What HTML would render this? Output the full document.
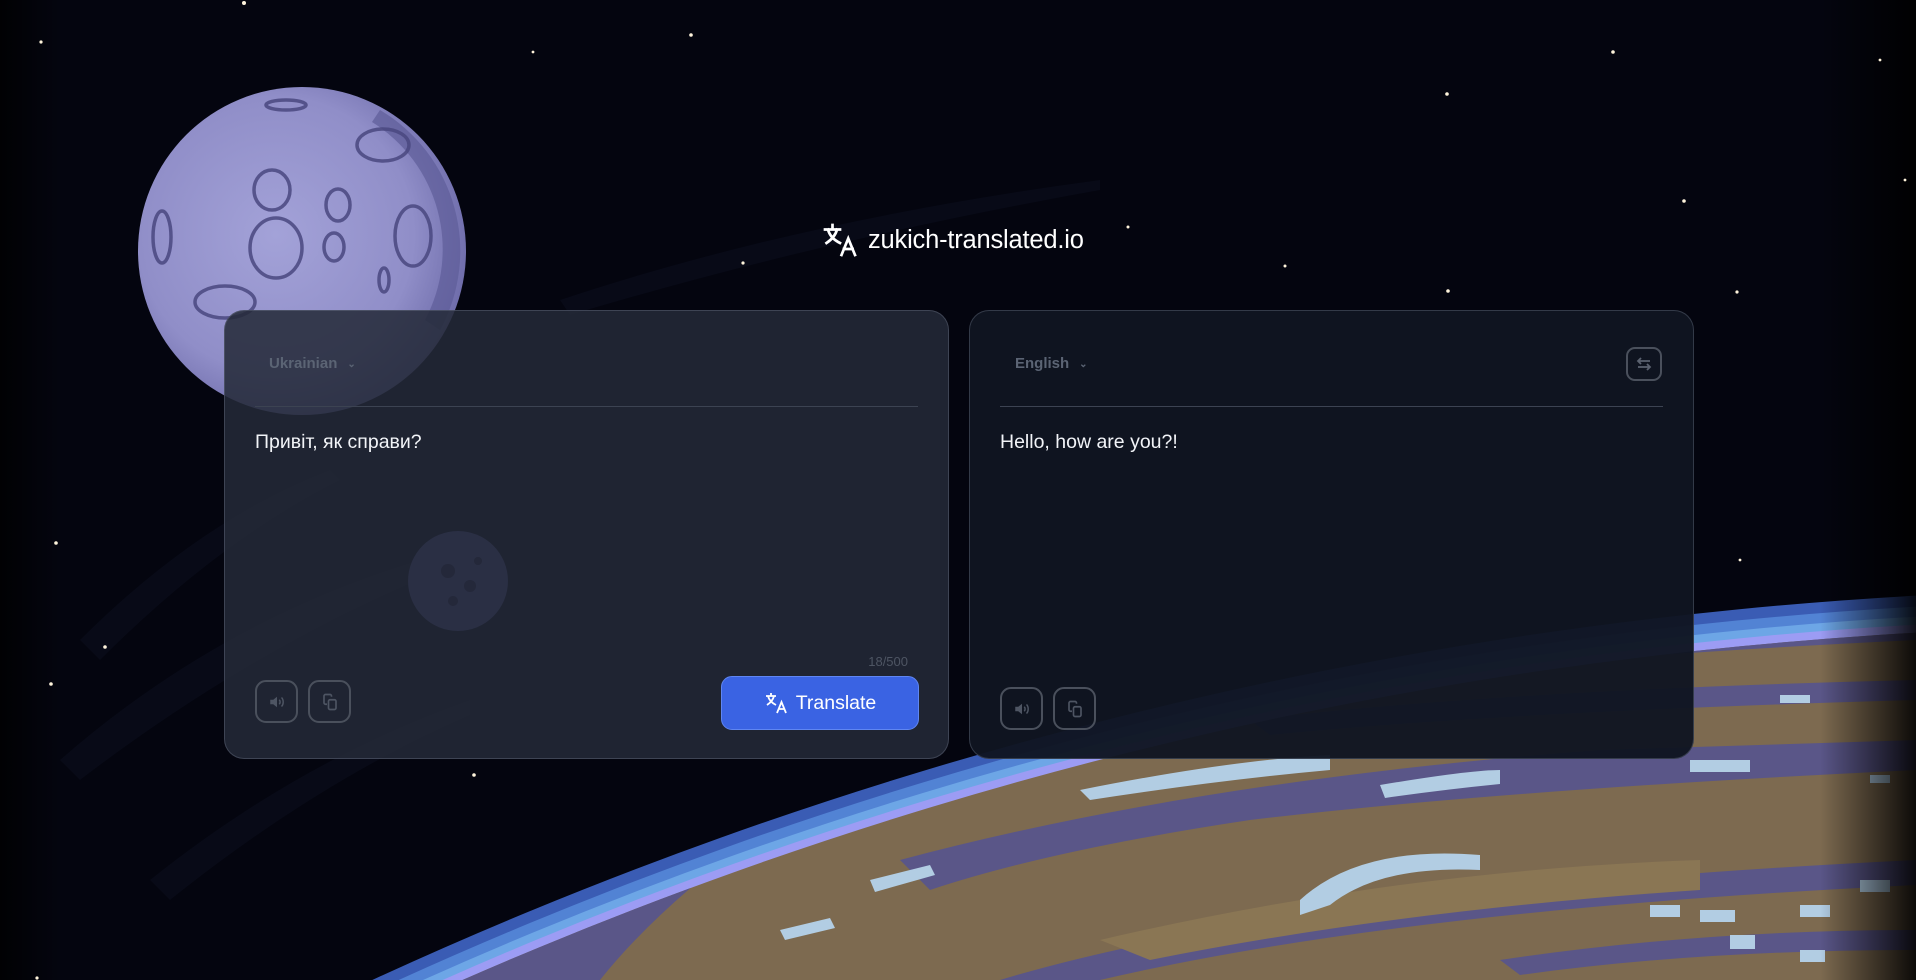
<!DOCTYPE html>
<html><head><meta charset="utf-8">
<style>
*{margin:0;padding:0;box-sizing:border-box}
html,body{width:1916px;height:980px;overflow:hidden;background:#04050e;font-family:"Liberation Sans",sans-serif;position:relative}
#bg{position:absolute;left:0;top:0;display:block}
.logo{position:absolute;left:822px;top:222px;height:36px;display:flex;align-items:center;color:#fff;font-size:25.5px;letter-spacing:-0.2px}
.logo svg{margin-right:10px}
.card{position:absolute;top:310px;width:725px;height:449px;border-radius:20px;border:1px solid rgba(120,130,150,0.35);overflow:hidden}
.c1{left:224px;background:rgba(36,42,56,0.86)}
.c2{left:969px;background:rgba(16,21,33,0.96)}
.lang{position:absolute;top:44px;font-size:15px;font-weight:bold;color:#5b6474}
.lang span{font-size:10px;margin-left:10px;position:relative;top:-1px}
.div{position:absolute;left:30px;right:30px;top:95px;height:1px;background:#3c4352}
.txt{position:absolute;left:30px;top:120px;font-size:19.5px;color:#f2f4f8}
.ib{position:absolute;width:43px;height:43px;border:2px solid #4a505c;border-radius:11px;display:flex;align-items:center;justify-content:center}
.cnt{position:absolute;right:40px;top:343px;font-size:13px;color:#4e5563}
.tb{position:absolute;left:496px;top:365px;width:198px;height:54px;border-radius:11px;background:#3a63e3;border:1px solid #5f86f2;color:#fff;font-size:19.5px;display:flex;align-items:center;justify-content:center}
.tb svg{margin-right:8px}
</style></head><body>
<svg id="bg" width="1916" height="980" viewBox="0 0 1916 980">
<defs>
<radialGradient id="mg" cx="0.42" cy="0.45" r="0.6"><stop offset="0" stop-color="#a3a2d8"/><stop offset="0.7" stop-color="#908ec8"/><stop offset="1" stop-color="#6e6caa"/></radialGradient>
<linearGradient id="vr" x1="0" x2="1"><stop offset="0" stop-color="#000" stop-opacity="0"/><stop offset="1" stop-color="#000" stop-opacity="0.9"/></linearGradient>
<linearGradient id="vl" x1="1" x2="0"><stop offset="0" stop-color="#000" stop-opacity="0"/><stop offset="1" stop-color="#000" stop-opacity="0.8"/></linearGradient>
<clipPath id="pc"><circle cx="2154" cy="4844" r="4218"/></clipPath>
</defs>
<rect width="1916" height="980" fill="#04050f"/>
<g fill="#0a0d1b" opacity="0.7">
<path d="M80 640 Q200 520 330 470 L340 480 Q220 540 100 660Z"/>
<path d="M60 760 Q220 620 420 560 L430 575 Q250 650 80 780Z"/>
<path d="M150 880 Q300 760 470 700 L470 715 Q320 780 170 900Z"/>
<path d="M560 300 Q800 220 1100 180 L1100 190 Q820 240 570 315Z"/>
</g>
<!-- moon -->
<circle cx="302" cy="251" r="164" fill="url(#mg)"/>
<path d="M380 110 A164 164 0 0 1 440 330 L425 320 A150 150 0 0 0 372 122Z" fill="#5e5c98" opacity="0.7"/>
<g fill="none" stroke="#4a4880" stroke-width="3.5" opacity="0.85">
<ellipse cx="272" cy="190" rx="18" ry="20"/><ellipse cx="276" cy="248" rx="26" ry="30"/>
<ellipse cx="338" cy="205" rx="12" ry="16"/><ellipse cx="334" cy="247" rx="10" ry="14"/>
<ellipse cx="413" cy="236" rx="18" ry="30"/><ellipse cx="383" cy="145" rx="26" ry="16"/>
<ellipse cx="286" cy="105" rx="20" ry="5"/><ellipse cx="225" cy="302" rx="30" ry="16"/>
<ellipse cx="162" cy="237" rx="9" ry="26"/><ellipse cx="384" cy="280" rx="5" ry="12"/>
</g>
<!-- planet -->
<circle cx="2154" cy="4844" r="4255" fill="#3a5cb4"/>
<circle cx="2154" cy="4844" r="4244" fill="#5283d4"/>
<circle cx="2154" cy="4844" r="4234" fill="#6da6e6"/>
<circle cx="2154" cy="4844" r="4226" fill="#9c9cf4"/>
<circle cx="2154" cy="4844" r="4218" fill="#7d6a50"/>
<g clip-path="url(#pc)">
<g fill="#5a5688">
<path d="M0 980 L0 700 L1916 560 L1916 640 Q1500 660 1200 700 Q900 760 700 880 Q640 930 600 980Z"/>
<path d="M900 860 Q1200 780 1600 750 L1916 740 L1916 770 Q1500 790 1250 820 Q1050 850 930 890Z"/>
<path d="M1000 980 Q1300 890 1916 860 L1916 885 Q1400 910 1100 980Z"/>
<path d="M1250 720 Q1500 690 1916 680 L1916 700 Q1500 712 1270 735Z"/>
<path d="M1500 960 Q1700 930 1916 930 L1916 950 Q1700 950 1520 975Z"/>
</g>
<g fill="#8a7654"><path d="M1100 940 Q1400 870 1700 860 L1700 890 Q1400 910 1150 960Z"/></g>
<g fill="#b2cde3">
<path d="M1080 790 Q1230 760 1330 755 L1330 770 Q1220 780 1090 800Z"/>
<path d="M1380 785 Q1470 770 1500 770 L1500 784 Q1440 790 1385 798Z"/>
<path d="M1300 900 Q1360 845 1480 855 L1480 870 Q1380 865 1330 905 L1300 915Z"/>
<path d="M1690 760 L1750 760 L1750 772 L1690 772Z"/>
<path d="M870 880 L930 865 L935 875 L875 892Z"/>
<path d="M780 930 L830 918 L835 928 L785 940Z"/>
<rect x="1650" y="905" width="30" height="12"/><rect x="1700" y="910" width="35" height="12"/>
<rect x="1730" y="935" width="25" height="14"/><rect x="1800" y="905" width="30" height="12"/>
<rect x="1800" y="950" width="25" height="12"/><rect x="1860" y="880" width="30" height="12"/>
<rect x="1870" y="775" width="20" height="8"/><rect x="1780" y="695" width="30" height="8"/>
</g>
</g>
<rect x="1820" y="0" width="96" height="980" fill="url(#vr)"/>
<rect x="0" y="0" width="60" height="980" fill="url(#vl)"/>
<g fill="#fff4dc">
<circle cx="244" cy="3" r="2"/><circle cx="41" cy="42" r="1.6"/><circle cx="533" cy="52" r="1.4"/>
<circle cx="691" cy="35" r="1.8"/><circle cx="1613" cy="52" r="1.8"/><circle cx="1447" cy="94" r="1.8"/>
<circle cx="1684" cy="201" r="1.8"/><circle cx="1448" cy="291" r="1.8"/><circle cx="1737" cy="292" r="1.6"/>
<circle cx="1128" cy="227" r="1.5"/><circle cx="1285" cy="266" r="1.5"/><circle cx="743" cy="263" r="1.6"/>
<circle cx="56" cy="543" r="1.8"/><circle cx="105" cy="647" r="1.8"/><circle cx="51" cy="684" r="1.8"/>
<circle cx="474" cy="775" r="1.8"/><circle cx="1880" cy="60" r="1.4"/><circle cx="1905" cy="180" r="1.4"/>
<circle cx="37" cy="978" r="1.6"/><circle cx="1740" cy="560" r="1.4"/>
</g>
</svg>

<div class="logo">
<svg width="36" height="36" viewBox="0 0 24 24" fill="none" stroke="#fff" stroke-width="1.8" stroke-linecap="square"><path d="M2 5h10M7 2v3M4 5c1 4 4 7 8 9M10 5c-1 4-4 7-7 9"/><path d="M13 22l4.5-11L22 22M14.6 18h5.8"/></svg>
zukich-translated.io</div>

<div class="card c1">
<svg style="position:absolute;left:183px;top:220px" width="100" height="100"><circle cx="50" cy="50" r="50" fill="#2a2f44"/><g fill="#24283a"><circle cx="40" cy="40" r="7"/><circle cx="62" cy="55" r="6"/><circle cx="45" cy="70" r="5"/><circle cx="70" cy="30" r="4"/></g></svg>
<div class="lang" style="left:44px">Ukrainian<span>&#8964;</span></div>
<div class="div"></div>
<div class="txt">Привіт, як справи?</div>
<div class="cnt">18/500</div>
<div class="ib" style="left:30px;top:369px"><svg width="18" height="18" viewBox="0 0 24 24"><path d="M3 9h4l5-4v14l-5-4H3z" fill="#4e5563"/><path d="M15 9c1.5 1.5 1.5 4.5 0 6M18 6c3 3 3 9 0 12" stroke="#4e5563" stroke-width="2" fill="none"/></svg></div>
<div class="ib" style="left:83px;top:369px"><svg width="18" height="18" viewBox="0 0 24 24" fill="none" stroke="#4e5563" stroke-width="2.2"><path d="M14 5V4a2 2 0 0 0-2-2H6a2 2 0 0 0-2 2v9a2 2 0 0 0 2 2h2"/><rect x="10" y="9" width="10" height="13" rx="2"/></svg></div>
<div class="tb"><svg width="24" height="24" viewBox="0 0 24 24" fill="none" stroke="#fff" stroke-width="1.8"><path d="M2 5h10M7 2v3M4 5c1 4 4 7 8 9M10 5c-1 4-4 7-7 9"/><path d="M13 22l4.5-11L22 22M14.6 18h5.8"/></svg>Translate</div>
</div>

<div class="card c2">
<div class="lang" style="left:45px">English<span>&#8964;</span></div>
<div class="ib" style="left:656px;top:36px;width:36px;height:34px;border-radius:9px"><svg width="20" height="18" viewBox="0 0 24 24" fill="none" stroke="#5b6270" stroke-width="2.4"><path d="M20 8H4M8 4L4 8l4 4M4 16h16M16 12l4 4-4 4"/></svg></div>
<div class="div"></div>
<div class="txt">Hello, how are you?!</div>
<div class="ib" style="left:30px;top:376px"><svg width="18" height="18" viewBox="0 0 24 24"><path d="M3 9h4l5-4v14l-5-4H3z" fill="#4e5563"/><path d="M15 9c1.5 1.5 1.5 4.5 0 6M18 6c3 3 3 9 0 12" stroke="#4e5563" stroke-width="2" fill="none"/></svg></div>
<div class="ib" style="left:83px;top:376px"><svg width="18" height="18" viewBox="0 0 24 24" fill="none" stroke="#4e5563" stroke-width="2.2"><path d="M14 5V4a2 2 0 0 0-2-2H6a2 2 0 0 0-2 2v9a2 2 0 0 0 2 2h2"/><rect x="10" y="9" width="10" height="13" rx="2"/></svg></div>
</div>
</body></html>
